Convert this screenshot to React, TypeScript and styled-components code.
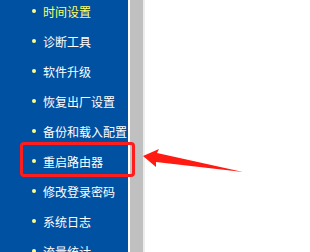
import React from 'react';
import styled, { createGlobalStyle } from 'styled-components';

const GlobalStyle = createGlobalStyle`
  html, body {
    margin: 0;
    padding: 0;
    background: #ffffff;
  }
`;

const Page = styled.div`
  position: relative;
  display: flex;
  width: 310px;
  height: 252px;
  overflow: hidden;
  font-family: 'Noto Sans CJK SC', 'DejaVu Sans', sans-serif;
`;

const Sidebar = styled.div`
  width: 128px;
  flex-shrink: 0;
  background-color: #0051a2;
`;

const MenuList = styled.ul`
  list-style: none;
  margin: -4px 0 0;
  padding: 0;
`;

const MenuItem = styled.li<{ $active?: boolean; $marked?: boolean }>`
  position: relative;
  display: flex;
  align-items: center;
  height: 30px;
  padding-left: 32px;
  font-size: 12px;
  color: ${(props) => (props.$active ? '#ffff66' : '#ffffff')};
  white-space: nowrap;

  &::before {
    content: '';
    width: 4px;
    height: 4px;
    border-radius: 50%;
    background-color: #ffff88;
    margin-right: 7px;
  }

  ${(props) =>
    props.$marked &&
    `
    &::after {
      content: '';
      position: absolute;
      left: 20px;
      top: -4px;
      width: 109px;
      height: 29px;
      border: 3px solid #ff1c1c;
      border-radius: 4px;
      z-index: 2;
    }
  `}
`;

const Gap = styled.div`
  width: 2px;
  flex-shrink: 0;
  background-color: #ffffff;
`;

const ScrollBar = styled.div`
  width: 13px;
  flex-shrink: 0;
  background-color: #c0c0c0;
`;

const Edge = styled.div`
  width: 2px;
  flex-shrink: 0;
  background-color: #ececec;
`;

const Content = styled.div`
  flex: 1;
  background-color: #ffffff;
`;

const Arrow = styled.svg`
  position: absolute;
  left: 0;
  top: 0;
  z-index: 3;
  pointer-events: none;
`;

const items = [
  '时间设置',
  '诊断工具',
  '软件升级',
  '恢复出厂设置',
  '备份和载入配置',
  '重启路由器',
  '修改登录密码',
  '系统日志',
  '流量统计',
];

export default function App() {
  return (
    <>
      <GlobalStyle />
      <Page>
        <Sidebar>
          <MenuList>
            {items.map((label, i) => (
              <MenuItem key={label} $active={i === 0} $marked={i === 5}>
                {label}
              </MenuItem>
            ))}
          </MenuList>
        </Sidebar>
        <Gap />
        <ScrollBar />
        <Edge />
        <Content />
        <Arrow width="310" height="252" viewBox="0 0 310 252">
          <polygon
            points="143,156 159,149 157,153 243,172 156,162 156,167"
            fill="#ff1a12"
          />
        </Arrow>
      </Page>
    </>
  );
}
